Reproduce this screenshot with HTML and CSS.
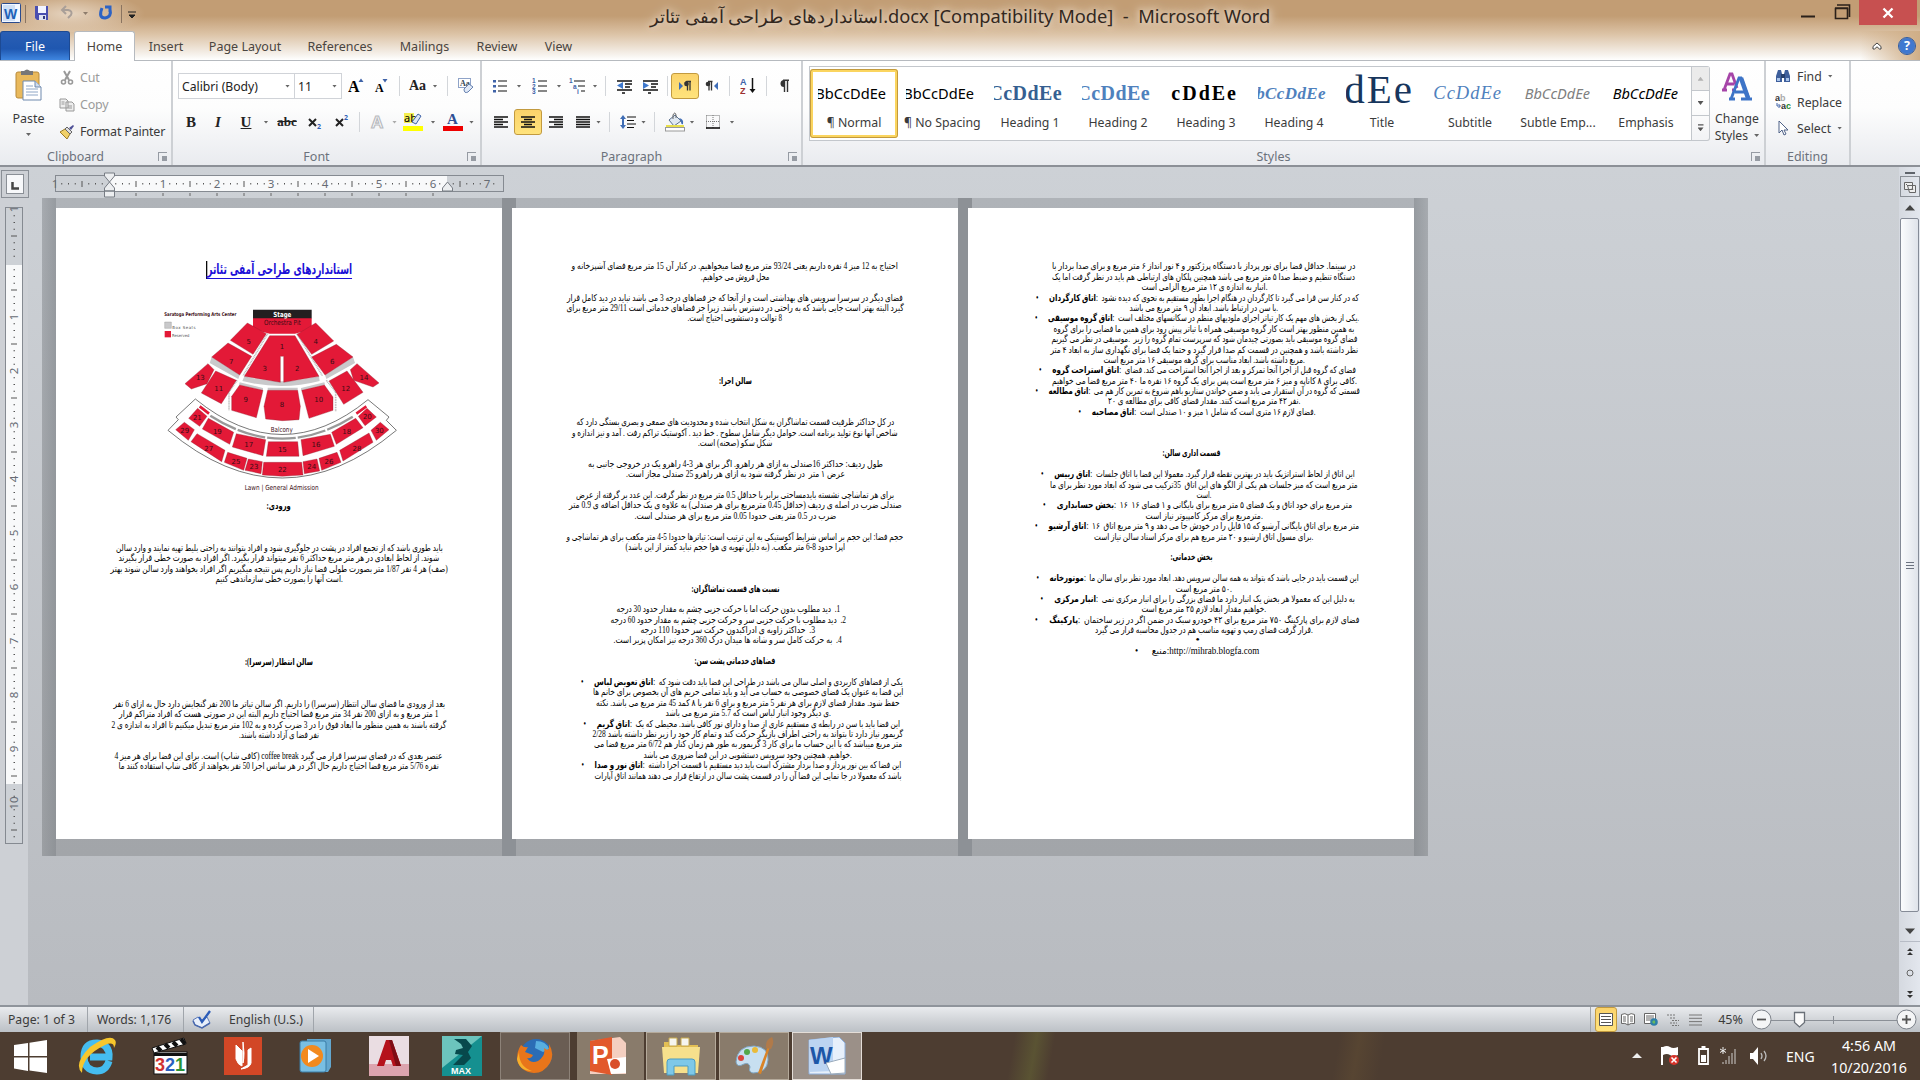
FILE: index.html
```html
<!DOCTYPE html>
<html lang="en">

<head>
    <meta charset="UTF-8">
    <title>استانداردهای طراحی آمفی تئاتر.docx [Compatibility Mode] - Microsoft Word</title>
    <link rel="stylesheet" href="styles.css">
</head>

<body>
    <header class="titlebar">
        <div class="quick">
            <svg width="130" height="26" viewBox="0 0 130 26">
                <rect x="1.5" y="3.500" width="19" height="19" rx="1" fill="#f4f8ff" stroke="#2a4b8d"/>
                <rect x="3" y="5" width="12" height="16" fill="#cfe0f6"/>
                <text x="4" y="19" class="i-w">W</text>
                <path d="M25.500 5v18M121.500 5v18" stroke="#8a7460"/>
                <path d="M35 6h13v14H37l-2-2z" fill="#4a4fb0"/><path d="M38 6h8v7h-8z" fill="#f3f5ff"/><path d="M39 15h7v5h-7z" fill="#dfe3f2"/><path d="M43 16h2v3h-2z" fill="#333a80"/>
                <path d="M63 10h5q5 1 3 5l-3 3M66 6l-4 4 4 4" fill="none" stroke="#a99f98" stroke-width="2"/>
                <path d="M83 12h5l-2.500 3z" fill="#8d7c6c"/>
                <path d="M102 8q-4 10 3 10 7-1 5-9M105 7h5v5" fill="none" stroke="#2d63c4" stroke-width="3"/>
            </svg>
            <svg class="more" width="8" height="8" viewBox="0 0 8 8"><path d="M0 1h8M1 4l3 3 3-3z" stroke="#222" fill="#222"/></svg>
        </div>
        <h1>استانداردهای طراحی آمفی تئاتر.docx [Compatibility Mode] &nbsp;-&nbsp; Microsoft Word</h1>
        <div class="winbtns">
            <svg width="58" height="25" viewBox="0 0 58 25"><path d="M0 16.500h14" stroke="#2b211a" stroke-width="2"/><path d="M34.500 8.500h12v10h-12zM34 8h13M36 5h12.500v12" fill="none" stroke="#2b211a" stroke-width="1.600"/></svg>
            <div class="close"><svg width="12" height="12" viewBox="0 0 12 12"><path d="M1.500 1.500l9 9m0-9l-9 9" stroke="#fff" stroke-width="2.300"/></svg></div>
        </div>
    </header>

    <nav class="tabs">
        <a class="file">File</a>
        <a class="home">Home</a>
        <a class="t1">Insert</a>
        <a class="t2">Page Layout</a>
        <a class="t3">References</a>
        <a class="t4">Mailings</a>
        <a class="t5">Review</a>
        <a class="t6">View</a>
        <div class="help">
            <svg width="10" height="8" viewBox="0 0 10 8"><path d="M1 4.500L5 1l4 3.500v2.500H7.500L5 4.800 2.500 7H1z" fill="#fff" stroke="#444"/></svg>
            <span>?</span>
        </div>
    </nav>

    <section class="ribbon">
        <div class="group clipboard">
            <div class="body">
                <div class="paste">
                    <svg width="28" height="32" viewBox="0 0 28 32"><rect x="1" y="3" width="23" height="26" rx="2" fill="#e9b95c" stroke="#b88a3a"/><path d="M6 2h3q3-3 6 0h3v4H6z" fill="#777"/><path d="M8 12h12l6 6v13H8z" fill="#fff" stroke="#6f89ad"/><path d="M20 12v6h6" fill="#cfdcee" stroke="#6f89ad"/><path d="M11 17h7M11 20h12M11 23h12M11 26h12" stroke="#8ea6c6"/></svg>
                    <span>Paste</span>
                    <i class="dd"></i>
                </div>
                <ul class="clip-list">
                    <li class="off"><svg width="16" height="16" viewBox="0 0 16 16"><path d="M5 1l5 9M11 1L6 10" stroke="#999" stroke-width="2"/><circle cx="4.500" cy="12" r="2" fill="none" stroke="#999" stroke-width="1.600"/><circle cx="11.500" cy="12" r="2" fill="none" stroke="#999" stroke-width="1.600"/></svg>Cut</li>
                    <li class="off"><svg width="16" height="16" viewBox="0 0 16 16"><path d="M1 2h6l2 2v7H1zM7 5h6l2 2v7H7z" fill="#eee" stroke="#999"/><path d="M9 9h4M9 11h4M2.500 5h3M2.500 7h3" stroke="#999"/></svg>Copy</li>
                    <li><svg width="16" height="16" viewBox="0 0 16 16"><path d="M1 8l5-3 5 5-3 5z" fill="#f0d068" stroke="#9c7b28"/><path d="M6 5l2-2 5 5-2 2z" fill="#ddd" stroke="#666"/><path d="M10 4l4-3 1 1-3 4z" fill="#4d4f96"/></svg>Format Painter</li>
                </ul>
            </div>
            <footer>Clipboard<i class="launch"></i></footer>
        </div>

        <div class="group font">
            <div class="row font1">
                <div class="combo">Calibri (Body)<i class="dd"></i></div>
                <div class="combo">11<i class="dd"></i></div>
                <svg width="18" height="18" viewBox="0 0 18 18"><text x="0" y="15" class="ser b s17">A</text><path d="M10.500 5L13 1.500 15.500 5z" fill="#3f63a8"/></svg>
                <svg width="18" height="18" viewBox="0 0 18 18"><text x="2" y="15" class="ser b s13">A</text><path d="M9.500 2h5L12 5.500z" fill="#3f63a8"/></svg>
                <i class="sep"></i>
                <span class="ser b aa">Aa</span>
                <i class="dd"></i>
                <i class="sep"></i>
                <svg width="20" height="20" viewBox="0 0 20 20"><rect x="2.500" y="2.500" width="12" height="9" fill="#fff" stroke="#8fa3c8"/><text x="4" y="10" class="ser b s8">Aa</text><path d="M8 13l5-5 4 3-5 5q-4 2-4-3z" fill="#dfe8f6" stroke="#6681b0"/></svg>
            </div>
            <div class="row font2">
                <b class="ser s15">B</b>
                <span class="ser s15 b it">I</span>
                <span class="ser s15 b un">U</span>
                <i class="dd"></i>
                <span class="ser s12 b st">abc</span>
                <svg width="18" height="18" viewBox="0 0 18 18"><path d="M3 6l7 7m0-7l-7 7" stroke="#222" stroke-width="2"/><text x="11" y="16" class="sub">2</text></svg>
                <svg width="18" height="18" viewBox="0 0 18 18"><path d="M3 6l7 7m0-7l-7 7" stroke="#222" stroke-width="2"/><text x="11" y="7" class="sub">2</text></svg>
                <i class="sep"></i>
                <svg width="20" height="20" viewBox="0 0 20 20"><text x="4" y="16" class="glow">A</text></svg>
                <i class="dd off"></i>
                <svg width="22" height="22" viewBox="0 0 22 22"><rect x="1" y="15" width="20" height="5" fill="#ff0"/><rect x="2" y="2" width="10" height="10" fill="#f5ef50"/><text x="2" y="11" class="s11">ab</text><path d="M10 11l6-8 3 2-5 8z" fill="#dce6f5" stroke="#3f63a8"/></svg>
                <i class="dd"></i>
                <svg width="22" height="22" viewBox="0 0 22 22"><rect x="1" y="15" width="20" height="5" fill="#e00"/><text x="5" y="13" class="ser b fc">A</text></svg>
                <i class="dd"></i>
            </div>
            <footer>Font<i class="launch"></i></footer>
        </div>

        <div class="group para">
            <div class="row para1">
                <svg width="15" height="16" viewBox="0 0 15 16"><path d="M5 3h9M5 8h9M5 13h9" stroke="#111" stroke-width="1.200"/><path d="M0 2h3v2.500H0zM0 7h3v2.500H0zM0 12h3v2.500H0z" fill="#3f63a8"/></svg>
                <i class="dd"></i>
                <svg width="15" height="16" viewBox="0 0 15 16"><path d="M6 3h9M6 8h9M6 13h9" stroke="#111" stroke-width="1.200"/><text y="5" class="num">1</text><text y="10.500" class="num">2</text><text y="16" class="num">3</text></svg>
                <i class="dd"></i>
                <svg width="17" height="16" viewBox="0 0 17 16"><path d="M5 3h11M9 8h7M12 13h4" stroke="#111" stroke-width="1.200"/><text y="5" class="num">1</text><text x="4" y="10.500" class="num">a</text><text x="8" y="16" class="num">i</text></svg>
                <i class="dd"></i>
                <i class="sep"></i>
                <svg width="16" height="16" viewBox="0 0 16 16"><path d="M1 3h15M9 6h7M9 9h5M1 12h15M6 15h3" stroke="#111" stroke-width="1.300"/><path d="M7 4v7L1 7.500z" fill="#3e78cc"/></svg>
                <svg width="16" height="16" viewBox="0 0 16 16"><path d="M1 3h15M9 6h7M9 9h5M1 12h15M6 15h3" stroke="#111" stroke-width="1.300"/><path d="M1 4v7l6-3.500z" fill="#3e78cc"/></svg>
                <i class="sep"></i>
                <div class="on"><svg width="14" height="12" viewBox="0 0 14 12"><path d="M1 2v8l4-4z" fill="#3e6db8"/><path d="M7 3.500a2 2 0 012-2h4M9.500 1.500v9M12 1.500v9" stroke="#333" fill="none" stroke-width="1.300"/><circle cx="8.500" cy="4" r="2.300" fill="#333"/></svg></div>
                <svg width="14" height="12" viewBox="0 0 14 12"><path d="M13 2v8L9 6z" fill="#3e6db8"/><path d="M3 1.500h4.500M4 1.500v9M6.500 1.500v9" stroke="#333" fill="none" stroke-width="1.300"/><circle cx="3" cy="4" r="2.300" fill="#333"/></svg>
                <i class="sep"></i>
                <svg width="16" height="18" viewBox="0 0 16 18"><text x="0" y="8" class="sa">A</text><text x="0" y="17" class="sz">Z</text><path d="M12.500 1v13" stroke="#111" stroke-width="1.500"/><path d="M9.500 12h6l-3 4z" fill="#111"/></svg>
                <i class="sep"></i>
                <svg width="12" height="14" viewBox="0 0 12 14"><path d="M5 1.200h6M6.500 1v12M9.500 1v12" stroke="#333" stroke-width="1.400"/><path d="M6 1v7a3.500 3.500 0 010-7z" fill="#333"/></svg>
            </div>
            <div class="row para2">
                <svg width="14" height="12" viewBox="0 0 14 12"><path d="M0 1h14M0 3.500h9M0 6h14M0 8.500h9M0 11h14" class="ln"/></svg>
                <div class="on"><svg width="14" height="12" viewBox="0 0 14 12"><path d="M0 1h14M3 3.500h8M0 6h14M3 8.500h8M0 11h14" class="ln"/></svg></div>
                <svg width="14" height="12" viewBox="0 0 14 12"><path d="M0 1h14M5 3.500h9M0 6h14M5 8.500h9M0 11h14" class="ln"/></svg>
                <svg width="14" height="12" viewBox="0 0 14 12"><path d="M0 1h14M0 3.500h14M0 6h14M0 8.500h14M0 11h14" class="ln"/></svg>
                <i class="dd"></i>
                <i class="sep"></i>
                <svg width="16" height="16" viewBox="0 0 16 16"><path d="M7 3h9M7 6.500h7M7 10h9M7 13.500h7" stroke="#111" stroke-width="1.200"/><path d="M3 1L0 5h2v6H0l3 4 3-4H4V5h2z" fill="#3f6db5"/></svg>
                <i class="dd"></i>
                <i class="sep"></i>
                <svg width="20" height="20" viewBox="0 0 20 20"><path d="M4 8l6-5 6 6-7 5z" fill="#dfe8f2" stroke="#59708f"/><path d="M8 7V3q2-4 3 0v3" fill="none" stroke="#666"/><path d="M14 6q5 1 4 6-2 1-2-3z" fill="#3f6db5"/><path d="M1 14h18" stroke="#e9e04c" stroke-width="2"/><rect x=".5" y="15.500" width="19" height="3.500" fill="#fff" stroke="#999"/></svg>
                <i class="dd"></i>
                <svg width="14" height="14" viewBox="0 0 14 14"><path d="M.5 .5h13v13M.5 .5v13M7 0v13M0 6.500h14" fill="none" stroke="#777" stroke-dasharray="1 1"/><path d="M0 13h14" stroke="#000" stroke-width="1.500"/></svg>
                <i class="dd"></i>
            </div>
            <footer>Paragraph<i class="launch"></i></footer>
        </div>

        <div class="group styles">
            <div class="body">
                <div class="gallery">
                    <div class="style sel"><p>BbCcDdEe</p><span>¶ Normal</span></div>
                    <div class="style"><p>BbCcDdEe</p><span>¶ No Spacing</span></div>
                    <div class="style h1"><p>CcDdEe</p><span>Heading 1</span></div>
                    <div class="style h2"><p>CcDdEe</p><span>Heading 2</span></div>
                    <div class="style h3"><p>cDdEe</p><span>Heading 3</span></div>
                    <div class="style h4"><p>bCcDdEe</p><span>Heading 4</span></div>
                    <div class="style ti"><p>dEe</p><span>Title</span></div>
                    <div class="style su"><p>CcDdEe</p><span>Subtitle</span></div>
                    <div class="style se"><p>BbCcDdEe</p><span>Subtle Emp...</span></div>
                    <div class="style em"><p>BbCcDdEe</p><span>Emphasis</span></div>
                </div>
                <div class="gal-btns">
                    <i><b class="up"></b></i>
                    <i><b class="dn"></b></i>
                    <i><b class="dn bar"></b></i>
                </div>
                <div class="change">
                    <svg width="32" height="30" viewBox="0 0 32 30"><path d="M1 19h5M11 19h4M3 19L9 3h2l5 14M6 13h7" fill="none" stroke="#a645a8" stroke-width="2.800"/><path d="M8 28h6M20 28h11M10 28L18 7h2l8 21M14 21h10" fill="none" stroke="#3d74c7" stroke-width="2.800"/><path d="M20 7l7 20" stroke="#3d74c7" stroke-width="4.500"/></svg>
                    <span>Change</span>
                    <span>Styles <i class="dd"></i></span>
                </div>
            </div>
            <footer>Styles<i class="launch"></i></footer>
        </div>

        <div class="group editing">
            <ul>
                <li><svg width="16" height="14" viewBox="0 0 16 14"><path d="M3 1h3l1 4v8H1V7zM10 1h3l2 6v6H9V5z" fill="#3e5f9c"/><path d="M6 5h4v4H6z" fill="#26406e"/><path d="M2 9h3v3H2zM11 9h3v3h-3z" fill="#a9c4ea"/></svg>Find <i class="dd"></i></li>
                <li><svg width="16" height="16" viewBox="0 0 16 16"><text x="0" y="7" class="rp">a<tspan fill="#aaa">b</tspan></text><text x="6" y="15" class="rp">a<tspan fill="#1c8a2c">c</tspan></text><path d="M2 9v3h3M3.500 10l2 2-2 2" fill="none" stroke="#3f63a8"/></svg>Replace</li>
                <li><svg width="16" height="16" viewBox="0 0 16 16"><path d="M4 1v12l3-3 2 5 2-1-2-4h4z" fill="#fff" stroke="#4f6288"/></svg>Select <i class="dd"></i></li>
            </ul>
            <footer>Editing</footer>
        </div>
    </section>

    <main class="work">
        <aside class="vside">
            <div class="tabstop"><span><svg width="8" height="8" viewBox="0 0 8 8"><path d="M1.500 0v6.500H8" fill="none" stroke="#444" stroke-width="2.500"/></svg></span></div>
            <div id="vruler"></div>
        </aside>
        <div class="canvas">
            <div id="hruler"></div>
            <div class="sheets" id="sheets"></div>
        </div>
        <aside class="scroll">
            <i class="split"></i>
            <div class="browse"><svg width="14" height="14" viewBox="0 0 14 14"><path d="M1.500 2.500h8v7h-8zM4.500 5.500h8v7h-6z" fill="#eee" stroke="#666"/><path d="M3 4l2 2M9 8l1 2M7 9l1 1" stroke="#666"/></svg></div>
            <div class="arr"><svg width="10" height="6" viewBox="0 0 10 6"><path d="M0 5.500L5 0l5 5.500z" fill="#444"/></svg></div>
            <div class="thumb"><i></i><i></i><i></i></div>
            <div class="arr down"><svg width="10" height="6" viewBox="0 0 10 6"><path d="M0 .5h10L5 6z" fill="#444"/></svg></div>
            <div class="nav"><svg width="8" height="56" viewBox="0 0 8 56"><path d="M1 6l3-3 3 3zM1 10l3-3 3 3zM1 46h6l-3 3zM1 50h6l-3 3z" fill="#333"/><circle cx="4" cy="28" r="3" fill="none" stroke="#666"/></svg></div>
        </aside>
    </main>

    <footer class="status">
        <span class="pg">Page: 1 of 3</span>
        <span class="wd">Words: 1,176</span>
        <span class="lang"><svg width="22" height="20" viewBox="0 0 22 20"><path d="M2 10l5-3 4 3 5-3 3 6-8 5-7-3z" fill="#e8effa" stroke="#5a78b8"/><path d="M2 11l2 4 7 3 8-5" fill="none" stroke="#4a69ad" stroke-width="1.500"/><path d="M8 7l3 5L19 1" fill="none" stroke="#2b5cb8" stroke-width="2.300"/></svg>English (U.S.)</span>
        <div class="views">
            <div class="v on"><svg width="14" height="13" viewBox="0 0 14 13"><path d="M.5 .5h13v12H.5z" fill="#fff" stroke="#555"/><path d="M2 3.500h10M2 6.500h10M2 9.500h10" stroke="#555"/></svg></div>
            <div class="v"><svg width="14" height="13" viewBox="0 0 14 13"><path d="M7 2Q4-.5 .5 1.500v9Q4 9.500 7 12 10 9.500 13.500 10.500v-9Q10-.5 7 2zM7 2v10" fill="#fff" stroke="#666"/><path d="M2 4h3M2 6h3M2 8h3M9 4h3M9 6h3M9 8h3" stroke="#666"/></svg></div>
            <div class="v"><svg width="14" height="13" viewBox="0 0 14 13"><path d="M.5 .5h11v10H.5z" fill="#fff" stroke="#666"/><path d="M2 3h8M2 5h8M2 7h5" stroke="#666"/><circle cx="10" cy="9" r="3.800" fill="#2d7fa8"/><path d="M8 9q2-3 3-1t-1 3z" fill="#65b860"/></svg></div>
            <div class="v"><svg width="12" height="12" viewBox="0 0 12 12"><path d="M0 1h9M3 4h6M5 6.500h7M3 9h7M5 11.500h7" stroke="#777" stroke-dasharray="2 1"/></svg></div>
            <div class="v"><svg width="13" height="12" viewBox="0 0 13 12"><path d="M0 1h13M0 4.300h13M0 7.600h13M0 11h13" stroke="#777"/></svg></div>
        </div>
        <span class="pct">45%</span>
        <svg class="zoomer" width="168" height="24" viewBox="0 0 168 24">
            <path d="M20 12.500h126M82.500 8v8" stroke="#8b9097"/>
            <circle cx="10.500" cy="11.500" r="9.500" fill="#f4f5f6" stroke="#7d828a"/><path d="M6 11.500h9" stroke="#555" stroke-width="1.800"/>
            <path d="M43.500 4.500h10v10l-5 4.500-5-4.500z" fill="#fafafa" stroke="#6a7078" stroke-width="1.300"/>
            <circle cx="155.500" cy="11.500" r="9.500" fill="#f4f5f6" stroke="#7d828a"/><path d="M151 11.500h9M155.500 7v9" stroke="#555" stroke-width="1.800"/>
        </svg>
    </footer>

    <div class="taskbar">
        <div class="apps">
            <div class="app start"><svg width="33" height="33" viewBox="0 0 33 33"><path d="M0 5l14-2v13H0zM15.500 2.700L33 0v16H15.500zM0 17.500h14V31L0 28.500zM15.500 17.500H33V33l-17.500-2.500z" fill="#fff"/></svg></div>
            <div class="app"><svg width="42" height="40" viewBox="0 0 42 40"><path d="M33 25q-3 10-12 10Q8 34 8 21 8 7 21 7q13 1 12 14H14" fill="none" stroke="#45bdf0" stroke-width="7"/><path d="M6 37Q-3 28 14 11 34-3 39 4q2 3-1 8 0-7-9-3Q6 20 6 37z" fill="#f6c62c"/></svg></div>
            <div class="app"><svg width="38" height="38" viewBox="0 0 38 38"><rect x="3" y="15" width="33" height="22" fill="#fff" stroke="#111"/><path d="M1 11L33 1l2 6L3 16z" fill="#fff" stroke="#111"/><path d="M6 10l4 4M14 7l4 4M22 5l4 4M30 2l4 5" stroke="#111" stroke-width="4"/><path d="M3 16h33v3H3z" fill="#111"/><text x="4" y="34" class="mp"><tspan fill="#d03030">3</tspan><tspan fill="#2b5fc0">2</tspan><tspan fill="#2a9438">1</tspan></text></svg></div>
            <div class="app"><svg width="38" height="38" viewBox="0 0 38 38"><path d="M0 0h38v38H0z" fill="#d24726"/><path d="M12 8v14q2 6 6 7V14zM19 5v21q1-4 1-10zM24 13v15l-7 4q9-1 10-6V11z" fill="#fff" stroke="#fff"/></svg></div>
            <div class="app"><svg width="34" height="36" viewBox="0 0 34 36"><path d="M8 1h24v28l-3 5H8z" fill="#63a7cf"/><rect x="1" y="3" width="26" height="31" rx="2" fill="#79bfe3" stroke="#3a7ca6"/><circle cx="13" cy="18" r="11" fill="#f28a1e"/><path d="M9 11v14l11-7z" fill="#fff"/></svg></div>
            <div class="app"><svg width="40" height="40" viewBox="0 0 40 40"><path d="M0 0h40v40H0z" fill="#eadde2"/><path d="M0 28h40v12H0z" fill="#dca4ae"/><path d="M17 4h6l9 26h-8l-2-6h-5l-2 6H8z" fill="#b5121b"/><path d="M20 4h3l9 26h-5z" fill="#7d0d14"/></svg></div>
            <div class="app"><svg width="40" height="40" viewBox="0 0 40 40"><path d="M0 0h40v40H0z" fill="#159090"/><path d="M0 0h40L0 32z" fill="#6cc4bd"/><path d="M12 3h12l6 7-4 6 3 6-7 7H11l7-7 3-3-8-1 1-4 7-2-2-4z" fill="#07494c"/><text x="9" y="38" class="max">MAX</text></svg></div>
            <div class="app open"><svg width="38" height="38" viewBox="0 0 38 38"><circle cx="20" cy="18" r="16" fill="#2b6cb5"/><path d="M20 4q10 0 13 8l-6 3-8-4z" fill="#58aee0"/><path d="M5 8q3 3 7 2l-3 5 8 3q-2 4-6 3 4 6 11 3 8-5 6-13 6 5 5-4 6 10 1 19-6 10-16 10Q4 35 1 22q0-8 4-14z" fill="#e8751a"/><path d="M3 15q0 15 13 19Q3 34 1 22z" fill="#f7b02c"/></svg></div>
            <div class="app ppt"><svg width="38" height="38" viewBox="0 0 38 38"><path d="M1 4l30-4 6 6v31H1z" fill="#f4cfc0"/><path d="M1 4l22-4v38L1 34z" fill="#e2592c"/><text x="3" y="27" class="pp">P</text><path d="M18 22l19-2v16l-15 1z" fill="#fff"/><circle cx="26" cy="27" r="5" fill="#d9502b"/></svg></div>
            <div class="app open lit"><svg width="40" height="40" viewBox="0 0 40 40"><path d="M3 6h10l2 3h22v28H3z" fill="#e3bf54"/><path d="M8 2h8v8H8zM20 2h8v8h-8z" fill="#f5f5ef" stroke="#c7a94a"/><path d="M1 11h38l-2 26H3z" fill="#f6e08c"/><path d="M6 39V26q0-3 3-3h22q3 0 3 3v13h-7V30H13v9z" fill="#7ec8e8" stroke="#4a9cc2"/></svg></div>
            <div class="app open lit"><svg width="40" height="40" viewBox="0 0 40 40"><path d="M2 26Q3 10 20 10q15 1 14 14-1 13-15 13-5-1-3-6-1-5-6-3-7 4-8-2z" fill="#c7dff0" stroke="#7fa5c2"/><circle cx="7" cy="22" r="3" fill="#d9453c"/><circle cx="13" cy="16" r="3" fill="#53a84a"/><circle cx="21" cy="14" r="3" fill="#e9bb3a"/><path d="M24 37L34 10l2 1-9 27z" fill="#d98428"/><path d="M32 12q-1-8 6-11 3 5-1 12z" fill="#b07a4a"/></svg></div>
            <div class="app open word"><svg width="38" height="38" viewBox="0 0 38 38"><path d="M1 3l30-3 6 6v31H1z" fill="#e7f0fb" stroke="#8fb1de"/><path d="M1 3l24-3v34L1 35z" fill="#bcd4f2"/><text x="2" y="27" class="wd2">W</text><path d="M18 26l19-5v15l-14 1z" fill="#fff" stroke="#9ab"/></svg></div>
        </div>
        <div class="tray">
            <svg width="150" height="22" viewBox="0 0 150 22">
                <path d="M0 13l5-5 5 5z" fill="#eee"/>
                <path d="M30 2v18" stroke="#fff" stroke-width="2"/><path d="M31 2q4-2 7 0t8 0v8q-5 2-8 0t-7 0z" fill="#fff"/><circle cx="42" cy="15" r="5" fill="#d8342b"/><path d="M39.500 12.500l5 5m0-5l-5 5" stroke="#fff" stroke-width="1.600"/>
                <path d="M67 4h9v15h-9zM69.500 2h4" fill="none" stroke="#fff" stroke-width="1.800"/><path d="M69 10h5v7h-5z" fill="#fff"/>
                <path d="M90 17h2v2h-2zM93 15h2v4h-2zM96 11h2v8h-2zM99 8h2v11h-2zM102 4h2v15h-2z" fill="#8e857e"/><path d="M91 2v7M88 4l6 3.500m0-3.500l-6 3.500" stroke="#eee"/>
                <path d="M118 8h3l5-6v18l-5-6h-3z" fill="#fff"/><path d="M129 8q2 3 0 6M132 6q4 5 0 10" fill="none" stroke="#bbb" stroke-width="1.300"/>
            </svg>
            <span>ENG</span>
            <div class="clock"><span>4:56 AM</span><span>10/20/2016</span></div>
        </div>
    </div>

    <script src="script.js"></script>
</body>

</html>
```
FILE: styles.css
```css
* {
    box-sizing: border-box;
}
body {
    margin: 0;
    width: 1920px;
    height: 1080px;
    overflow: hidden;
    display: flex;
    flex-direction: column;
    font: 12.5px "Noto Sans", "Open Sans", sans-serif;
    color: #3b3b3b;
    background: linear-gradient(#c29d74 0, #c29d74 16px, #dcc3a6 34px, #f8f5f1 56px, #fff 60px);
}
ul, p, h1 {
    margin: 0;
    padding: 0;
    list-style: none;
}
svg {
    display: block;
    flex: none;
}
i {
    font-style: normal;
}

/* title bar */
.titlebar {
    height: 31px;
    flex: none;
    display: grid;
    grid-template-columns: 500px 1fr 500px;
}
.quick {
    display: flex;
    background: radial-gradient(ellipse 75px 22px at 70px 14px, #e6d4c0, transparent);
}
.quick .more {
    margin: 11px 0 0 -2px;
}
.titlebar h1 {
    justify-self: center;
    font-size: 18.3px;
    font-weight: normal;
    line-height: 32px;
    white-space: pre;
    color: #33281e;
    text-shadow: 0 0 6px #e8d8c6, 0 0 10px #e8d8c6, 0 0 14px #e8d8c6;
}
.winbtns {
    display: flex;
    justify-content: flex-end;
    padding-right: 3px;
}
.close {
    width: 58px;
    height: 25px;
    display: flex;
    align-items: center;
    justify-content: center;
    background: #c75050;
}

/* tabs */
.tabs {
    height: 30px;
    flex: none;
    display: flex;
    border-bottom: 1px solid #b6babf;
}
.tabs a {
    text-align: center;
    line-height: 31px;
    color: #4a4540;
}
.tabs .file {
    width: 70px;
    color: #fff;
    background: linear-gradient(#2a5fb4, #1f57b0 60%, #3f86e0);
    border: 1px solid #1d4a93;
    border-bottom: 0;
    border-radius: 3px 3px 0 0;
    line-height: 29px;
}
.tabs .home {
    width: 61px;
    height: 30px;
    margin: 0 1px 0 4px;
    background: #fff;
    border: 1px solid #b6babf;
    border-bottom: 0;
    border-radius: 3px 3px 0 0;
    line-height: 29px;
}
.t1 { width: 60px; }
.t2 { width: 98px; }
.t3 { width: 92px; }
.t4 { width: 77px; }
.t5 { width: 68px; }
.t6 { width: 55px; }
.help {
    margin-left: auto;
    width: 100px;
    padding-right: 5px;
    display: flex;
    align-items: center;
    justify-content: flex-end;
    gap: 17px;
    background: linear-gradient(90deg, transparent 40%, #cfae87);
}
.help span {
    width: 16px;
    height: 16px;
    border-radius: 50%;
    background: #3f78d0;
    color: #fff;
    font-weight: bold;
    line-height: 16px;
    text-align: center;
    outline: 1px solid #2b5aa5;
}

/* ribbon */
.ribbon {
    height: 106px;
    flex: none;
    display: flex;
    background: linear-gradient(#fff, #fdfdfd 45%, #e9ebef);
    border-bottom: 2px solid #8c9097;
}
.group {
    display: flex;
    flex-direction: column;
    border-right: 2px solid #cdd0d4;
}
.group footer {
    margin-top: auto;
    height: 18px;
    padding-right: 20px;
    display: grid;
    grid-template-columns: 1fr auto 1fr;
    align-items: center;
    color: #6c727c;
}
.group footer::before {
    content: "";
}
.group.editing footer {
    padding-right: 0;
}
.launch {
    justify-self: end;
    margin-right: -16px;
    width: 9px;
    height: 9px;
    border: solid #969ba3;
    border-width: 1px 0 0 1px;
    background: linear-gradient(#969ba3, #969ba3) 100% 100% / 5px 5px no-repeat;
}
.dd {
    display: inline-block;
    width: 5px;
    height: 3px;
    background: #666;
    clip-path: polygon(0 0, 100% 0, 50% 100%);
}
.dd.off {
    background: #aaa;
}
.sep {
    width: 1px;
    height: 20px;
    background: #d3d6da;
}
.clipboard { width: 173px; }
.font { width: 309px; }
.para { width: 321px; }
.styles { width: 963px; }
.editing { width: 85px; }
.clipboard .body {
    display: flex;
}
.paste {
    width: 57px;
    padding-top: 8px;
    display: flex;
    flex-direction: column;
    align-items: center;
}
.paste span {
    margin: 9px 0 5px;
    line-height: 18px;
}
.clip-list {
    padding: 3px 0 0 2px;
}
.clip-list li {
    display: flex;
    align-items: center;
    gap: 5px;
    height: 27px;
    white-space: nowrap;
    letter-spacing: -.2px;
}
.clip-list .off {
    color: #9b9b9b;
}
.row {
    display: grid;
    height: 26px;
    align-items: center;
    justify-items: center;
}
.font .row {
    margin-left: 5px;
}
.para .row {
    margin-left: 6px;
}
.font1, .para1 {
    margin-top: 12px;
}
.font2, .para2 {
    margin-top: 10px;
}
.font1 { grid-template-columns: 117px 47px 29px 22px 12px 25px 10px 14px 24px; }
.font2 { grid-template-columns: 26px 28px 28px 12px 30px 26px 28px 6px 29px 7px 30px 10px 30px 7px; }
.para1 { grid-template-columns: 25px 12px 29px 10px 27px 8px 12px 26px 26px 8px 28px 26px 8px 30px 6px 30px; }
.para2 { grid-template-columns: 26px 28px 28px 25px 7px 14px 24px 7px 15px 25px 10px 31px 8px; }
.combo {
    width: 100%;
    height: 26px;
    padding: 0 4px 0 3px;
    display: flex;
    align-items: center;
    justify-content: space-between;
    background: #fff;
    border: 1px solid #d0d3d8;
    color: #222;
    font-size: 12.2px;
    white-space: nowrap;
}
.combo + .combo {
    border-left: 0;
}
.on {
    width: 100%;
    height: 26px;
    display: flex;
    align-items: center;
    justify-content: center;
    border: 1px solid #c29a3f;
    border-radius: 3px;
    background: linear-gradient(#fbd36b, #ffe37c);
}
.ser { font-family: "Liberation Serif", serif; color: #222; }
.b { font-weight: bold; }
.it { font-style: italic; }
.un { text-decoration: underline; }
.st { text-decoration: line-through; }
.aa { font-size: 14px; }
.s17 { font-size: 16px; }
.s15 { font-size: 15px; }
.s13 { font-size: 12px; }
.s12 { font-size: 13px; }
.s11 { font-size: 11px; }
.s8 { font-size: 8px; fill: #345; }
.sub { font-size: 7px; font-weight: bold; fill: #2f5fb5; }
.glow { font: bold 17px "Liberation Sans", sans-serif; fill: #fff; stroke: #b9bbbf; stroke-width: 1.2; }
.fc { font-size: 15px; fill: #2d4f94; }
.num { font: bold 6.5px "Liberation Sans", sans-serif; fill: #3f63a8; }
.sa { font: bold 9px "Liberation Sans", sans-serif; fill: #3f63a8; }
.sz { font: bold 9px "Liberation Sans", sans-serif; fill: #9c3030; }
.rp { font: bold 9px "Liberation Sans", sans-serif; fill: #333; }
.ln { stroke: #111; stroke-width: 1.3; }
.i-w { font: bold 14px "Liberation Sans", sans-serif; fill: #1c62b9; }
.mp { font: bold 18px "Liberation Sans", sans-serif; }
.max { font: bold 9px "Liberation Sans", sans-serif; fill: #fff; }
.pp { font: bold 25px "Liberation Sans", sans-serif; fill: #fff; }
.wd2 { font: bold 24px "Liberation Sans", sans-serif; fill: #1c56a8; }

.styles .body {
    display: flex;
    margin: 5px 0 0 6px;
}
.gallery {
    display: flex;
    width: 883px;
    height: 75px;
    background: #fff;
    border: 1px solid #c3c7cc;
}
.style {
    width: 88px;
    height: 69px;
    margin-top: 2px;
    padding: 5px 0 0 8px;
    flex: none;
}
.style.sel {
    padding: 2px 0 0 5px;
    border: 3px solid #fbd55f;
    border-radius: 3px;
    outline: 1px solid #c29a3f;
    outline-offset: -1px;
}
.style p {
    width: 68px;
    height: 32px;
    overflow: hidden;
    display: flex;
    justify-content: flex-end;
    font-size: 14.6px;
    line-height: 39px;
    color: #000;
}
.style span {
    display: block;
    width: 76px;
    margin: 7px 0 0 -2px;
    font-size: 12.3px;
    line-height: 20px;
    text-align: center;
    white-space: nowrap;
}
.style.h1 p, .style.h2 p, .style.h3 p, .style.h4 p, .style.ti p, .style.su p {
    font-family: "Liberation Serif", serif;
    font-weight: bold;
    font-size: 20px;
    letter-spacing: .4px;
}
.style.h1 p { color: #365f91; }
.style.h2 p { color: #4f81bd; }
.style.h3 p { letter-spacing: 2px; }
.style.h4 p { font-size: 17px; color: #4f81bd; font-style: italic; }
.style.ti p { font-size: 41px; line-height: 30px; font-weight: normal; color: #17365d; letter-spacing: 2px; }
.style.su p { font-size: 18.5px; font-weight: normal; font-style: italic; color: #4f81bd; letter-spacing: 1px; }
.style.se p { color: #808080; font-style: italic; }
.style.em p { font-style: italic; }
.gal-btns {
    width: 18px;
    height: 75px;
    display: grid;
    grid-template-rows: 1fr 1fr 1fr;
    border: 1px solid #c3c7cc;
    border-left: 0;
    border-radius: 0 3px 3px 0;
}
.gal-btns i {
    display: flex;
    align-items: center;
    justify-content: center;
    border-bottom: 1px solid #c3c7cc;
}
.gal-btns i:first-child {
    background: #ebebeb;
}
.gal-btns i:last-child {
    border-bottom: 0;
}
.gal-btns b {
    width: 6px;
    height: 4px;
    background: #555;
    clip-path: polygon(0 0, 100% 0, 50% 100%);
}
.gal-btns .up {
    background: #b2b2b2;
    clip-path: polygon(0 100%, 100% 100%, 50% 0);
}
.gal-btns .bar {
    height: 7px;
    clip-path: polygon(0 0, 100% 0, 100% 15%, 0 15%, 0 45%, 100% 45%, 50% 100%, 0 45%);
}
.change {
    width: 54px;
    padding-top: 5px;
    display: flex;
    flex-direction: column;
    align-items: center;
}
.change svg {
    margin-bottom: 9px;
}
.change span {
    line-height: 17px;
    font-size: 12.2px;
    white-space: nowrap;
}
.change .dd, .editing .dd {
    vertical-align: 3px;
    margin-left: 3px;
}
.editing ul {
    padding: 2px 0 0 9px;
}
.editing li {
    display: flex;
    align-items: center;
    height: 26px;
    font-size: 12.3px;
}
.editing li svg {
    margin-right: 6px;
}
.editing .dd {
    margin-left: 6px;
}

/* work area */
.work {
    flex: 1;
    display: flex;
    min-height: 0;
    background: linear-gradient(#cdd1d6, #b8bbc0);
    border-bottom: 2px solid #8f949b;
}
.vside {
    width: 28px;
    background: #cdd0d5;
}
.tabstop {
    width: 28px;
    height: 28px;
    margin: 3px 0 0 1px;
    padding: 3px 4px;
    border: 1px solid #8a8f96;
}
.tabstop span {
    display: flex;
    align-items: center;
    justify-content: center;
    height: 20px;
    padding-top: 4px;
    border: 1px solid #8a8f96;
    background: #f7f8fa;
}
#vruler {
    margin: 9px 0 0 5px;
}
#vruler svg, #hruler svg {
    overflow: visible;
}
#vruler text, #hruler text {
    font-size: 11.5px;
    text-anchor: middle;
    fill: #666b73;
}
.canvas {
    flex: 1;
    padding: 7px 0 0 14px;
}
#hruler {
    margin-left: 10px;
}
.sheets {
    width: 1386px;
    height: 658px;
    display: flex;
    gap: 10px;
    padding: 10px 14px 17px;
    background: linear-gradient(90deg, transparent 460px, #8d9196 460px, #8d9196 474px, transparent 474px, transparent 916px, #8d9196 916px, #8d9196 930px, transparent 930px), linear-gradient(90deg, rgba(120, 125, 130, .15), rgba(120, 125, 130, .45) 14px, rgba(120, 125, 130, 0) 14px, rgba(120, 125, 130, 0) 1372px, rgba(120, 125, 130, .45) 1372px, rgba(120, 125, 130, .15)), linear-gradient(#afb3b8, #a2a5a9);
}
.sheet {
    width: 446px;
    height: 631px;
    padding-top: 53.4px;
    background: #fff;
}
.line {
    height: 10.4px;
    display: flex;
    justify-content: center;
    align-items: center;
    direction: rtl;
}
.line span {
    flex: none;
    white-space: pre;
    font: 9.3px/10.4px "Liberation Serif", "DejaVu Sans", serif;
    color: #000;
}
.line.head span {
    font-weight: bold;
}
.line.title {
    height: 16.4px;
}
.line.title span {
    font: bold 14.5px/17px "DejaVu Sans", sans-serif;
    color: #1c10d8;
    border-bottom: 1px solid #1c10d8;
    border-left: 2px solid #000;
}
.line.item, .line.cont {
    direction: ltr;
}
.line.item {
    padding-left: 13px;
}
.line.cont {
    padding-left: 26px;
}
.line.num1 {
    padding-right: 14px;
}
.seating {
    margin: 30.1px auto 8.5px 107px;
}
.seating text {
    font: 21px "DejaVu Sans", sans-serif;
    text-anchor: middle;
    fill: #3a0c14;
}
.seating .stage {
    fill: #fff;
    font-weight: bold;
}
.seating .name {
    font-size: 15px;
    font-weight: bold;
}
.seating .key {
    font-size: 12px;
    fill: #555;
}

/* scrollbar */
.scroll {
    width: 21px;
    background: linear-gradient(90deg, #d5d9e0, #e3e7ee);
    display: flex;
    flex-direction: column;
    align-items: center;
}
.split {
    width: 10px;
    height: 2px;
    margin: 5px 0 2px;
    background: #5f646b;
}
.browse {
    width: 20px;
    height: 21px;
    display: flex;
    align-items: center;
    justify-content: center;
    border: 1px solid #8a8f96;
}
.arr {
    height: 21px;
    display: flex;
    align-items: center;
}
.thumb {
    width: 19px;
    height: 694px;
    display: flex;
    flex-direction: column;
    justify-content: center;
    align-items: center;
    gap: 2px;
    border: 1px solid #858b97;
    border-radius: 2px;
    background: linear-gradient(90deg, #fbfcfd, #dfe3ea);
}
.thumb i {
    width: 8px;
    height: 1px;
    background: #6c7380;
}
.arr.down {
    height: 30px;
    width: 20px;
    padding-top: 8px;
    justify-content: center;
    border-bottom: 1px solid #b7bcc6;
}
.nav {
    padding-top: 3px;
}

/* status bar */
.status {
    height: 25px;
    flex: none;
    display: flex;
    align-items: center;
    background: linear-gradient(#e9ebee, #d2d5d9 50%, #bcc1c6);
    white-space: nowrap;
}
.pg {
    width: 88px;
    padding-left: 8px;
}
.wd {
    width: 96px;
    padding-left: 9px;
}
.lang {
    width: 130px;
    padding-left: 7px;
    display: flex;
    align-items: center;
    gap: 16px;
}
.pg, .wd, .lang {
    height: 25px;
    line-height: 25px;
    border-right: 1px solid #a0a5ab;
    font-size: 12.2px;
}
.views {
    margin-left: auto;
    height: 25px;
    padding-left: 4px;
    display: flex;
    border-left: 1px solid #a0a5ab;
}
.v {
    width: 22.5px;
    height: 25px;
    display: flex;
    align-items: center;
    justify-content: center;
}
.pct {
    width: 33px;
    margin: 0 4px 0 7px;
    text-align: center;
}
.zoomer {
    margin-right: 1px;
}

/* taskbar */
.taskbar {
    height: 48px;
    flex: none;
    display: flex;
    justify-content: space-between;
    background: linear-gradient(100deg, transparent 1000px, #5a5333 1022px, transparent 1040px, transparent 1320px, #574532 1340px, transparent 1365px), #4d3d31;
}
.apps {
    display: flex;
}
.app {
    width: 73px;
    display: flex;
    align-items: center;
    justify-content: center;
}
.app.start {
    width: 60px;
}
.app.open {
    width: 70px;
    margin: 0 1px 0 2px;
    border: 1px solid #8d8278;
    background: #6a5d53;
}
.app.ppt {
    background: linear-gradient(90deg, transparent 6px, #897b6b 6px);
}
.app.lit {
    border-color: #b5aa9b;
    background: #897b6b;
}
.app.word {
    border-color: #e4ddd7;
    background: #9b9088;
}
.tray {
    display: flex;
    align-items: center;
    color: #fff;
    font-size: 14px;
}
.tray > span {
    margin-left: 4px;
    width: 32px;
}
.clock {
    width: 102px;
    padding-top: 1px;
    display: flex;
    flex-direction: column;
    text-align: center;
    line-height: 22px;
    font-size: 14.3px;
}
```
FILE: script.js
```js
// [kind, blank rows above, width in px, text, bold label]
const pages = [
    [
        ['title', 0, 146, 'استانداردهای طراحی آمفی تئاتر'],
        ['chart'],
        ['head', 0, 24, 'ورودی:'],
        ['', 3, 327, 'باید طوری باشد که از تجمع افراد در پشت در جلوگیری شود و افراد بتوانند به راحتی بلیط تهیه نمایند و وارد سالن'],
        ['', 0, 321, 'شوند. از لحاظ ابعادی در هر متر مربع حداکثر 6 نفر میتواند قرار بگیرد. اگر افراد به صورت خطی قرار بگیرند'],
        ['', 0, 337, '(صف) هر 4 نفر 1/87 متر بصورت طولی فضا نیاز داریم پس نتیجه میگیریم اگر افراد بخواهند وارد سالن شوند بهتر'],
        ['ltr', 0, 127, 'است آنها را بصورت خطی سازماندهی کنیم.'],
        ['head', 7, 68, 'سالن انتظار (سرسرا):'],
        ['', 3, 332, 'بعد از ورودی ما فضای سالن انتظار (سرسرا) را داریم. اگر سالن تیاتر ما 200 نفر گنجایش دارد حال به ازای 6 نفر'],
        ['', 0, 319, '1 متر مربع و به ازای 200 نفر 34 متر مربع فضا احتیاج داریم البته این در صورتی هست که افراد متراکم قرار'],
        ['', 0, 335, 'گرفته باشند به همین منظور ما ابعاد فوق را در 3 ضرب کرده و به 102 متر مربع تبدیل میکنیم تا افراد به اندازه ی 2'],
        ['', 0, 80, 'نفر فضا ی آزاد داشته باشند.'],
        ['', 1, 328, 'عنصر بعدی که در فضای سرسرا قرار می گیرد coffee break (کافی شاپ) است. برای این فضا برای هر میز 4'],
        ['', 0, 320, 'نفره 5/76 متر مربع فضا احتیاج داریم حال اگر در هر سانس اجرا 50 نفر بخواهند از کافی شاپ استفاده کنند ما']
    ],
    [
        ['', 0, 326, 'احتیاج به 12 میز 4 نفره داریم یعنی 93/24 متر مربع فضا میخواهیم. در کنار آن 15 متر مربع فضای آشپزخانه و'],
        ['', 0, 69, 'محل فروش می خواهیم.'],
        ['', 1, 336, 'فضای دیگر در سرسرا سرویس های بهداشتی است و از آنجا که جز فضاهای درجه 3 می باشد نباید در دید کامل قرار'],
        ['', 0, 337, 'گیرد البته بهتر است جایی باشد که به راحتی در دسترس باشد. زیرا جز فضاهای خدماتی است 29/11 متر مربع برای'],
        ['', 0, 94, '8 توالت و دستشویی احتیاج است.'],
        ['head', 5, 33, 'سالن اجرا:'],
        ['', 3, 318, 'در کل حداکثر ظرفیت قسمت تماشاگران به شکل انتخاب شده و محدودیت های صمعی و بصری بستگی دارد که'],
        ['', 0, 326, 'شاخص آنها نوع تولید برنامه است. حوامل دیگر شامل سطوح . خط دید . آکوستیک تراکم رفت . آمد و نیز اندازه و'],
        ['', 0, 74, 'شکل سکو (صحنه) است.'],
        ['', 1, 295, 'طول ردیف: حداکثر 16صندلی به ازای هر راهرو. اگر برای هر 3-4 راهرو یک در خروجی جانبی به'],
        ['', 0, 219, 'عرض ۱ متر  در نظر گرفته شود به ازای هر راهرو 25 صندلی مجاز است.'],
        ['', 1, 318, 'برای هر تماشاچی نشسته بایدمساحتی برابر با حداقل 0.5 متر مربع در نظر گرفت. این عدد بر گرفته از عرض'],
        ['', 0, 333, 'صندلی ضرب در اصله ی ردیف (حداقل 0.45 مترمربع برای هر صندلی) به علاوه ی یک حداقل اضافه ی 0.9 متر'],
        ['', 0, 202, 'ضرب در 0.5 متر یعنی حدودا 0.05 متر مربع برای هر صندلی است.'],
        ['', 1, 337, 'حجم فضا: این حجم بر اساس شرایط آکوستیکی به این ترتیب است: تیاترها حدودا 5-4 متر مکعب برای هر تماشاچی و'],
        ['', 0, 220, 'اپرا حدود 8-6 متر مکعب. (به دلیل تهویه ی هوا حجم نباید کمتر از این باشد)'],
        ['head', 3, 88, 'نسبت های قسمت تماشاگران:'],
        ['num1', 1, 224, '1.  دید مطلوب بدون حرکت اما با حرکت جزیی چشم به مقدار حدود 30 درجه'],
        ['num1', 0, 235, '2.  دید مطلوب با حرکت جزیی سر و حرکت جزیی چشم به مقدار حدود 60 درجه'],
        ['num1', 0, 175, '3.  حداکثر زاویه ی ادراکبدون حرکت سر حدودا 110 درجه'],
        ['num1', 0, 228, '4.  به حرکت کامل سر و شانه ها میدان درک 360 درجه نیز امکان پزیر است.'],
        ['head', 1, 81, 'فضاهای خدماتی پشت سن:'],
        ['item', 1, 322, 'یکی از فضاهای کاربردی و اصلی سالن می باشد در طراحی این فضا باید دقت شود که', 'اتاق تعویض لباس'],
        ['cont', 0, 310, 'این فضا به عنوان یک فضای خصوصی به حساب می آید و باید تمامی حریم های آن بخصوص برای خانم ها'],
        ['cont', 0, 304, 'حفظ شود. مقدار فضای لازم برای هر نفر 5 متر مربع و برای 6 نفر یا ۸ کمد 45 متر مربع می باشد. نکته'],
        ['cont', 0, 165, 'ی دیگر وجود انبار لباس است که 5.7 متر مربع می باشد.'],
        ['item', 0, 316, 'این فضا باید با سن در رابطه ی مستقیم عاری از صدا و دارای نور کافی باشد. محیطی که یک', 'اتاق گریم'],
        ['cont', 0, 311, 'گریمور نیاز دارد تا بتواند به راحتی اطراف بازیگر حرکت کند و تمام کار خود را زیر نظر داشته باشد 2/28'],
        ['cont', 0, 308, 'متر مربع میباشد که با این حساب ما برای کار 3 گریمور به طور هم زمان کنار هم 6/72 متر مربع فضا می'],
        ['cont', 0, 208, 'خواهیم. همچنین وجود سرویس دستشویی در این فضا ضروری می باشد.'],
        ['item', 0, 320, 'این فضا که بین نور پرداز و صدا بردار مشترک است باید دید مستقیم با قسمت اجرا داشته', 'اتاق نور و صدا'],
        ['cont', 0, 307, 'باشد که معمولا در جا نمایی این فضا آن را در قسمت پشت سالن در ارتفاع قرار می دهند همانند اتاق آپارات']
    ],
    [
        ['cont', 0, 303, 'در سینما. حداقل فضا برای نور پرداز با دستگاه پرژکتور و ۴ نور انداز ۶ متر مربع و برای صدا بردار با'],
        ['cont', 0, 303, 'دستگاه تنظیم و ضبط صدا ۵ متر مربع می باشد همچنین پلکان های ارتباطی هم باید در نظر گرفت اما یک'],
        ['cont', 0, 126, 'انبار به اندازه ی ۱۲ متر مربع الزامی است.'],
        ['item', 0, 323, 'که در کنار سن قرا می گیرد تا کارگردان در هنگام اجرا بطور مستقیم به نحوی که دیده نشود', 'اتاق کارگردان'],
        ['cont', 0, 149, 'با سن در ارتباط باشد. ابعاد آن ۹ متر مربع می باشد.'],
        ['item', 0, 324, 'یکی از بخش های مهم یک کار تیاتر اجرای ملودیهای منظم در سکانسهای مختلف است.', 'اتاق گروه موسیقی'],
        ['cont', 0, 301, 'به همین منظور بهتر است کار گروه موسیقی همراه با تیاتر پیش رود برای همین ما فضایی را برای گروه'],
        ['cont', 0, 306, 'فضای گروه موسیقی باید بصورتی چیدمان شود که سرپرست تمام گروه را زیر  .موسیقی در نظر می گیریم'],
        ['cont', 0, 308, 'نظر داشته باشد و همچنین در قسمت کم صدا قرار گیرد و حتما یک فضا برای نگهداری ساز به ابعاد ۴ متر'],
        ['cont', 0, 201, 'مربع داشته باشد. ابعاد مناسب برای گرهه موسیقی ۱۶ متر مربع است.'],
        ['item', 0, 317, 'فضای که گروه قبل از اجرا آنجا تمرکز و بعد از اجرا آنجا استراحت می کند. فضای', 'اتاق استراحت گروه'],
        ['cont', 0, 305, 'کافی برای ۸ کاناپه و میز ۶ متر مربع است پس برای یک گروه ۱۶ نفره ما ۴۰ متر مربع فضا می خواهیم.'],
        ['item', 0, 324, 'قسمتی که گروه در آن استقرار می یابد و ضمن خواندن سناریو باهم شروع به تمرین کار هم می', 'اتاق مطالعه'],
        ['cont', 0, 192, 'نفر ۴۲ متر مربع است کنند. مقدار فضای کافی برای مطالعه ی ۲۰.'],
        ['item', 0, 237, 'فضای لازم ۱۶ متری است که شامل ۱ میز و ۱۰ صندلی است.', 'اتاق مصاحبه'],
        ['head', 3, 58, 'قسمت اداری سالن:'],
        ['item', 1, 314, 'این اتاق از لحاظ استراتژیک باید در بهترین نقطه قرار گیرد. معمولا این فضا با اتاق جلسات', 'اتاق رییس'],
        ['cont', 0, 308, 'متر مربع است که میز جلسات هم یکی از الگو های این اتاق  35ترکیب می شود که ابعاد مورد نظر برای ما'],
        ['cont', 0, 15, 'است.'],
        ['item', 0, 309, 'متر مربع برای خود اتاق و یک فضای ۵ متر مربع برای بایگانی و ۱ فضای ۱۶  ۱۶', 'بخش حسابداری'],
        ['cont', 0, 117, 'مترمربع برای مرکز کامپیوتر نیاز است.'],
        ['item', 0, 324, 'متر مربع برای اتاق بایگانی آرشیو که ۱۵ فایل را در خودش جا می دهد و ۹ متر مربع اتاق  ۱۶', 'اتاق آرشیو'],
        ['cont', 0, 219, 'برای مسول اتاق ارشیو و ۲۰ متر مربع هم برای مرکز اسناد سالن نیاز است.'],
        ['head', 1, 42, 'بخش خدماتی:'],
        ['item', 1, 322, 'این قسمت باید در جایی باشد که بتواند به همه سالن سرویس دهد. ابعاد مورد نظر برای سالن ما', 'موتورخانه'],
        ['cont', 0, 56, '\u2067۵۰ متر مربع است\u2069.'],
        ['item', 0, 314, 'به دلیل این که معمولا هر بخش یک انبار دارد ما فضای بزرگی را برای انبار مرکزی نمی', 'انبار مرکزی'],
        ['cont', 0, 125, 'خواهیم مقدار ابعاد لازم ۲۵ متر مربع است.'],
        ['item', 0, 324, 'فضای لازم برای پارکینگ ۷۵۰ متر مربع برای ۴۲ خودرو سبک در ضمن اگر در زیر ساختمان', 'پارکینگ'],
        ['cont', 0, 218, 'قرار گرفت فضای رمپ و تهویه مناسب هم در جدول محاسبه قرار می گیرد.'],
        ['item', 0, 4, ''],
        ['item', 0, 124, 'منبع:http://mihrab.blogfa.com']
    ]
];

// seat blocks: [polygon, label, label x, label y]
const seats = [
    ['623,370 680,402 640,464 572,422', 5, 627, 432],
    ['828,370 882,424 816,464 772,404', 4, 828, 432],
    ['565,430 636,470 600,526 516,472', 7, 575, 492],
    ['890,434 940,472 856,526 816,472', 6, 878, 492],
    ['690,408 766,408 838,530 732,548 732,470 722,470 722,548 614,530', 1, 727, 447],
    ['505,492 523,510 502,552 455,568 436,552', 13, 482, 541],
    ['952,492 1018,550 1000,562 942,542 932,510', 14, 973, 541],
    ['528,514 590,542 545,612 485,580', 11, 537, 574],
    ['922,514 970,578 912,614 868,544', 12, 918, 573],
    ['600,556 670,572 650,654 576,632 576,590', 9, 618, 607],
    ['684,572 774,572 782,620 778,660 728,663 678,658 673,620', 8, 727, 623],
    ['786,572 854,556 880,592 880,632 808,656', 10, 837, 607],
    ['474,626 502,650 480,680 447,656', 21, 473, 660],
    ['982,626 1010,652 976,678 956,650', 20, 983, 659],
    ['506,656 582,698 570,734 488,688', 19, 533, 702],
    ['948,656 970,684 890,734 876,698', 18, 921, 702],
    ['590,702 678,720 670,768 578,742', 17, 627, 743],
    ['686,726 774,726 778,770 680,770', 15, 728, 756],
    ['784,720 872,704 884,740 790,768', 16, 829, 743],
    ['434,668 464,690 446,722 408,690', 29, 435, 701],
    ['1022,668 1048,690 1010,722 994,692', 30, 1019, 701],
    ['472,702 556,752 546,786 454,726', 27, 507, 753],
    ['988,700 1000,728 910,784 900,752', 28, 952, 753],
    ['564,758 622,776 612,812 554,788', 25, 589, 793],
    ['626,778 668,786 664,822 616,812', 23, 643, 809],
    ['672,788 786,788 790,826 728,830 668,826', 22, 728, 817],
    ['790,786 832,778 840,814 794,822', 24, 816, 808],
    ['838,776 892,758 904,788 846,812', 26, 868, 793]
];

const drawChart = () => `
<svg class="seating" width="236.700" height="185" viewBox="370 325 710 555">
    <path d="M467 598Q728 810 985 600L1048 652 1040 662 1070 692Q728 978 385 692L416 660 409 652z" fill="#fff" stroke="#333" stroke-width="2"/>
    <path d="M516 472l84 54-4 12-86-48zM940 472l-84 54 4 12 86-48zM614 530q110 30 224 0l2 14q-114 30-232 0zM600 548l70 17v7l-72-17zM684 564h90v8h-90zM854 548l-70 17v7l72-17z" fill="#c9c9cb"/>
    <path d="M512 648q216 138 432 0" fill="none" stroke="#999" stroke-width="7" stroke-dasharray="86 6"/>
    <path d="M684 402L610 528M592 542l-24 34v56M772 402l76 126M860 542l28 34v60" fill="none" stroke="#bbb" stroke-width="5" stroke-dasharray="3 2"/>
    <path d="M640 355h176v34l-50 13h-76l-50-13z" fill="#e31937"/>
    <path d="M640 330h176v26H640z" fill="#221f20"/>
    ${seats.map(s => `<polygon points="${s[0]}" fill="#e31937" stroke="#8a2030"/><text x="${s[2]}" y="${s[3]}">${s[1]}</text>`).join('')}
    <path d="M480 620l28 22M950 642l30-22" stroke="#e31937" stroke-width="8"/>
    <text x="675" y="513">3</text><text x="773" y="513">2</text>
    <text x="728" y="351" class="stage" textLength="54" lengthAdjust="spacingAndGlyphs">Stage</text>
    <text x="728" y="376" textLength="110" lengthAdjust="spacingAndGlyphs">Orchestra Pit</text>
    <text x="726" y="697" textLength="66" lengthAdjust="spacingAndGlyphs">Balcony</text>
    <text x="726" y="870" textLength="222" lengthAdjust="spacingAndGlyphs">Lawn | General Admission</text>
    <text x="482" y="348" class="name" textLength="216" lengthAdjust="spacingAndGlyphs">Saratoga Performing Arts Center</text>
    <path d="M375 367h20v19h-20z" fill="#c9c9cb" stroke="#888"/><path d="M375 394h19v19h-19z" fill="#e31937"/>
    <text x="433" y="388" class="key" textLength="70">Box Seats</text>
    <text x="423" y="413" class="key" textLength="52" lengthAdjust="spacingAndGlyphs">Reserved</text>
</svg>`;

const drawLine = ([kind, gap, width, text, label]) => {
    if (kind === 'chart') return drawChart();

    let inner = text;
    if (kind === 'item') {
        inner = '•' + (text ? '      ' : '');
        if (label) inner += `<b><bdi>${label}</bdi></b>:  `;
        inner += text.startsWith('منبع') ? text : `<bdi dir="ltr">${text}</bdi>`;
    }
    const blank = '<div class="line"></div>'.repeat(gap);
    const dir = kind === 'ltr' ? ' dir="ltr" ' : ' ';
    return `${blank}<div class="line ${kind}"><span${dir}data-w="${width}">${inner}</span></div>`;
};

document.querySelector('#sheets').innerHTML = pages.map(p => `<article class="sheet">${p.map(drawLine).join('')}</article>`).join('');

// squeeze each line to its width
document.querySelectorAll('.line span').forEach(el => {
    el.style.transform = `scaleX(${el.dataset.w / el.offsetWidth})`;
});

// one inch is 54px at this zoom
const ticks = (from, to, origin, place) => {
    let out = '';
    for (let n = Math.ceil((from - origin) / 6.75); origin + n * 6.75 < to - 2; n++) {
        const pos = origin + n * 6.75;
        if (pos < from + 2 || n === 0) continue;
        out += place(pos, n);
    }
    return out;
};

const hnum = (x, n) => `<text x="${x}" y="13.500">${n}</text>`;
const vnum = (y, n) => `<text transform="translate(13 ${y}) rotate(-90)">${n}</text>`;

document.querySelector('#hruler').innerHTML = `
<svg width="460" height="24" viewBox="0 0 460 24">
    <rect x="3.500" y="1.500" width="448" height="16" fill="#cdd1d6" stroke="#858a91"/>
    <rect x="58" y="2" width="337" height="15" fill="#f8f9fa"/>
    ${hnum(3, 1)}
    ${ticks(4, 449, 57, (x, n) => n % 8 === 0 ? hnum(x, Math.abs(n / 8)) : n % 4 === 0 ? `<path d="M${x} 7v6" stroke="#555"/>` : `<path d="M${x} 9v1.500" stroke="#555"/>`)}
    ${ticks(60, 400, 57, (x, n) => n % 4 === 0 ? `<path d="M${x} 19v3" stroke="#666"/>` : '')}
    <path d="M52.500 -1h10v3l-5 6-5-6zM52.500 17v-3l5-6 5 6v3zM52.500 17h10v6h-10zM390.500 17v-3l5-6 5 6v3z" fill="#eceef0" stroke="#777c84"/>
</svg>`;

document.querySelector('#vruler').innerHTML = `
<svg width="19" height="638" viewBox="0 0 19 638">
    <rect x=".5" y=".5" width="17" height="636" fill="#cdd1d6" stroke="#858a91"/>
    <rect x="1" y="58" width="16" height="519" fill="#f8f9fa"/>
    ${vnum(2, 1)}
    ${ticks(4, 634, 56, (y, n) => n % 8 === 0 ? vnum(y, Math.abs(n / 8)) : n % 4 === 0 ? `<path d="M6 ${y}h6" stroke="#555"/>` : `<path d="M8.500 ${y}h1.500" stroke="#555"/>`)}
</svg>`;
```
